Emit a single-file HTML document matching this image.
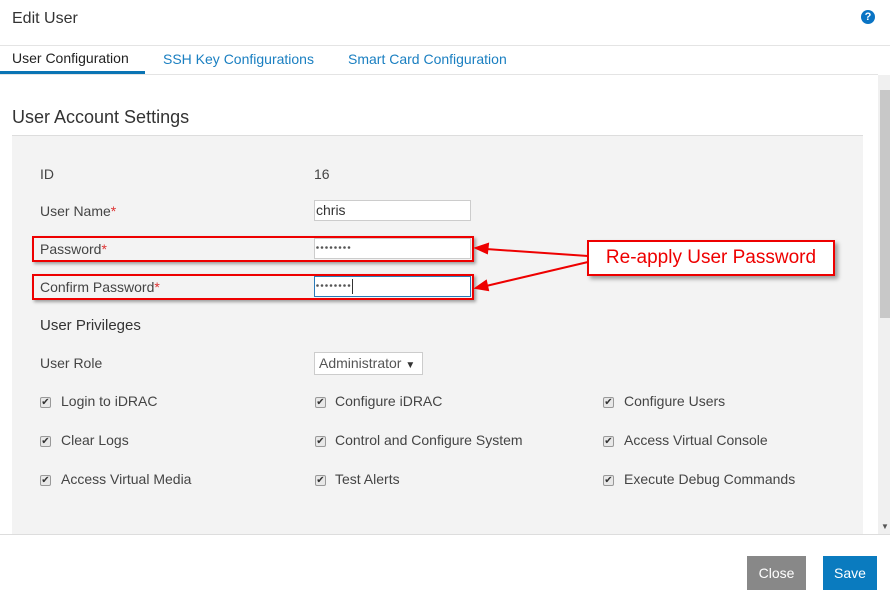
<!DOCTYPE html>
<html><head><style>
*{box-sizing:border-box;margin:0;padding:0}
body{width:890px;height:597px;overflow:hidden;background:#fff;font-family:"Liberation Sans",sans-serif;color:#444;position:relative;font-size:14px}
.a{position:absolute;white-space:nowrap}
.cb{position:absolute;width:11px;height:11px;border:1px solid #999;border-radius:2px;background:#e8e8e8;font-size:10px;line-height:9px;text-align:center;color:#333}
.in{position:absolute;background:#fff;border:1px solid #ccc;height:21px;font-size:14px;line-height:19px;padding-left:1px;color:#333}
.red{position:absolute;border:2px solid #e00;box-shadow:2px 2px 3px rgba(0,0,0,.35)}
</style></head><body>
<div class="a" style="left:12px;top:10px;font-size:16px;color:#333">Edit User</div>
<div class="a" style="left:861px;top:10px;width:14px;height:14px;border-radius:50%;background:#0a74c4;color:#fff;font-size:11px;font-weight:bold;text-align:center;line-height:14px">?</div>
<div class="a" style="left:0;top:45px;width:890px;height:1px;background:#e4e4e4"></div>
<div class="a" style="left:12px;top:50px;font-size:14px;color:#222">User Configuration</div>
<div class="a" style="left:163px;top:51px;font-size:14px;color:#1a7fc1">SSH Key Configurations</div>
<div class="a" style="left:348px;top:51px;font-size:14px;color:#1a7fc1">Smart Card Configuration</div>
<div class="a" style="left:0;top:74px;width:878px;height:1px;background:#e4e4e4"></div>
<div class="a" style="left:0;top:71px;width:145px;height:3px;background:#0a74b4"></div>
<div class="a" style="left:878px;top:75px;width:12px;height:460px;background:#f0f0f0"></div>
<div class="a" style="left:880px;top:90px;width:10px;height:228px;background:#c8c8c8"></div>
<div class="a" style="left:881px;top:522px;font-size:8px;color:#555">▼</div>
<div class="a" style="left:12px;top:107px;font-size:18px;color:#333">User Account Settings</div>
<div class="a" style="left:12px;top:135px;width:851px;height:400px;background:#f3f3f3;border-top:1px solid #ddd"></div>
<div class="a" style="left:40px;top:166px">ID</div>
<div class="a" style="left:314px;top:166px">16</div>
<div class="a" style="left:40px;top:203px">User Name<span style="color:#d33">*</span></div>
<div class="in" style="left:314px;top:200px;width:157px">chris</div>
<div class="a" style="left:40px;top:241px">Password<span style="color:#d33">*</span></div>
<div class="in" style="left:314px;top:238px;width:157px"></div>
<svg class="a" style="left:316px;top:246px" width="40" height="4"><g fill="#555"><circle cx="1.5" cy="1.5" r="1.3"/><circle cx="6" cy="1.5" r="1.3"/><circle cx="10.5" cy="1.5" r="1.3"/><circle cx="15" cy="1.5" r="1.3"/><circle cx="19.5" cy="1.5" r="1.3"/><circle cx="24" cy="1.5" r="1.3"/><circle cx="28.5" cy="1.5" r="1.3"/><circle cx="33" cy="1.5" r="1.3"/></g></svg>
<div class="a" style="left:40px;top:279px">Confirm Password<span style="color:#d33">*</span></div>
<div class="in" style="left:314px;top:276px;width:157px;border-color:#2a7ab8"></div>
<svg class="a" style="left:316px;top:284px" width="40" height="4"><g fill="#555"><circle cx="1.5" cy="1.5" r="1.3"/><circle cx="6" cy="1.5" r="1.3"/><circle cx="10.5" cy="1.5" r="1.3"/><circle cx="15" cy="1.5" r="1.3"/><circle cx="19.5" cy="1.5" r="1.3"/><circle cx="24" cy="1.5" r="1.3"/><circle cx="28.5" cy="1.5" r="1.3"/><circle cx="33" cy="1.5" r="1.3"/></g></svg>
<div class="a" style="left:352px;top:279px;width:1px;height:15px;background:#333"></div>
<div class="red" style="left:32px;top:236px;width:442px;height:26px"></div>
<div class="red" style="left:32px;top:274px;width:442px;height:26px"></div>
<svg class="a" style="left:470px;top:240px" width="130" height="60"><g stroke="#e00" stroke-width="2" fill="#e00"><line x1="118" y1="16" x2="16" y2="9"/><polygon points="6,8 18,4 17,13"/><line x1="118" y1="22" x2="16" y2="46"/><polygon points="6,48 16,41 18,50"/></g></svg>
<div class="a" style="left:587px;top:240px;width:248px;height:36px;border:2px solid #e00;background:#fff;box-shadow:3px 3px 4px rgba(0,0,0,.35);color:#e00;font-size:19px;line-height:32px;text-align:center">Re-apply User Password</div>
<div class="a" style="left:40px;top:317px;font-size:15px;color:#333">User Privileges</div>
<div class="a" style="left:40px;top:355px">User Role</div>
<div class="in" style="left:314px;top:352px;width:109px;height:23px;line-height:21px;color:#555;padding-left:4px">Administrator <span style="font-size:10px;color:#333">▼</span></div>
<div class="cb" style="left:40px;top:397px">✔</div><div class="a" style="left:61px;top:393px">Login to iDRAC</div>
<div class="cb" style="left:315px;top:397px">✔</div><div class="a" style="left:335px;top:393px">Configure iDRAC</div>
<div class="cb" style="left:603px;top:397px">✔</div><div class="a" style="left:624px;top:393px">Configure Users</div>
<div class="cb" style="left:40px;top:436px">✔</div><div class="a" style="left:61px;top:432px">Clear Logs</div>
<div class="cb" style="left:315px;top:436px">✔</div><div class="a" style="left:335px;top:432px">Control and Configure System</div>
<div class="cb" style="left:603px;top:436px">✔</div><div class="a" style="left:624px;top:432px">Access Virtual Console</div>
<div class="cb" style="left:40px;top:475px">✔</div><div class="a" style="left:61px;top:471px">Access Virtual Media</div>
<div class="cb" style="left:315px;top:475px">✔</div><div class="a" style="left:335px;top:471px">Test Alerts</div>
<div class="cb" style="left:603px;top:475px">✔</div><div class="a" style="left:624px;top:471px">Execute Debug Commands</div>
<div class="a" style="left:0;top:534px;width:890px;height:1px;background:#ddd"></div>
<div class="a" style="left:747px;top:556px;width:59px;height:34px;background:#888;color:#fff;text-align:center;line-height:34px">Close</div>
<div class="a" style="left:823px;top:556px;width:54px;height:34px;background:#0a7bbf;color:#fff;text-align:center;line-height:34px">Save</div>
</body></html>
